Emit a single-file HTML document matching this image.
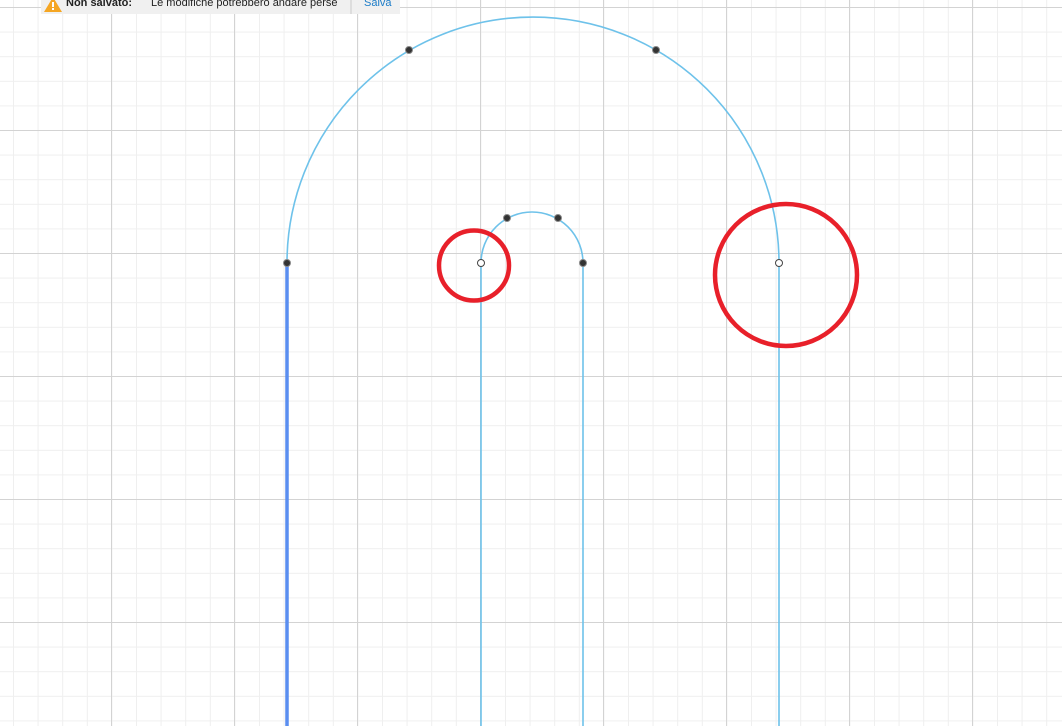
<!DOCTYPE html>
<html><head><style>
html,body{margin:0;padding:0;width:1062px;height:726px;overflow:hidden;background:#fff;font-family:"Liberation Sans",sans-serif}
svg{position:absolute;left:0;top:0}
.bar{position:absolute;left:41px;top:-4px;width:359px;height:18px;background:#f0f0f0;font-size:11px;color:#222}
.bar .a{position:absolute;left:25px;top:1px;font-weight:bold}
.bar .b{position:absolute;left:110px;top:1px}
.bar .sep{position:absolute;left:309px;top:0;width:2px;height:18px;background:#ddd}
.bar .s{position:absolute;left:323px;top:1px;color:#1a7bc7}
</style></head><body>
<svg width="1062" height="726" viewBox="0 0 1062 726">
<defs>
<pattern id="mi" x="13" y="7" width="24.6" height="24.6" patternUnits="userSpaceOnUse"><path d="M0 0.5H24.6M0.5 0V24.6" stroke="#efefef" stroke-width="1" fill="none"/></pattern>
<pattern id="ma" x="111" y="7" width="123" height="123" patternUnits="userSpaceOnUse"><path d="M0 0.5H123M0.5 0V123" stroke="#d3d3d3" stroke-width="1" fill="none"/></pattern>
</defs>
<rect width="1062" height="726" fill="url(#mi)"/>
<rect width="1062" height="726" fill="url(#ma)"/>
<g fill="none" stroke="#6ec2ea" stroke-width="1.6">
<path d="M287 263A246 246 0 0 1 779 263V726"/>
<path d="M481 726V263A51 51 0 0 1 583 263V726"/>
</g>
<path d="M287 263V726" stroke="#5a8ef0" stroke-width="3.5"/>
<g fill="#333" stroke="#888" stroke-width="1">
<circle cx="287" cy="263" r="3.5"/><circle cx="409" cy="50" r="3.5"/><circle cx="656" cy="50" r="3.5"/>
<circle cx="507" cy="218" r="3.5"/><circle cx="558" cy="218" r="3.5"/><circle cx="583" cy="263" r="3.5"/>
</g>
<g fill="#fff" stroke="#444" stroke-width="1"><circle cx="481" cy="263" r="3.5"/><circle cx="779" cy="263" r="3.5"/></g>
<g fill="none" stroke="#e8202a" stroke-width="4.5">
<circle cx="474" cy="265.5" r="35"/>
<circle cx="786" cy="275" r="71"/>
</g>
</svg>
<div class="bar">
<svg width="18" height="15" style="position:absolute;left:3px;top:1px" viewBox="0 0 18 15"><path d="M9 0L18 15H0Z" fill="#f5a623"/><rect x="8" y="5" width="2" height="5" fill="#fff"/><rect x="8" y="11" width="2" height="2" fill="#fff"/></svg>
<span class="a">Non salvato:</span>
<span class="b">Le modifiche potrebbero andare perse</span>
<span class="sep"></span>
<span class="s">Salva</span>
</div>
</body></html>
